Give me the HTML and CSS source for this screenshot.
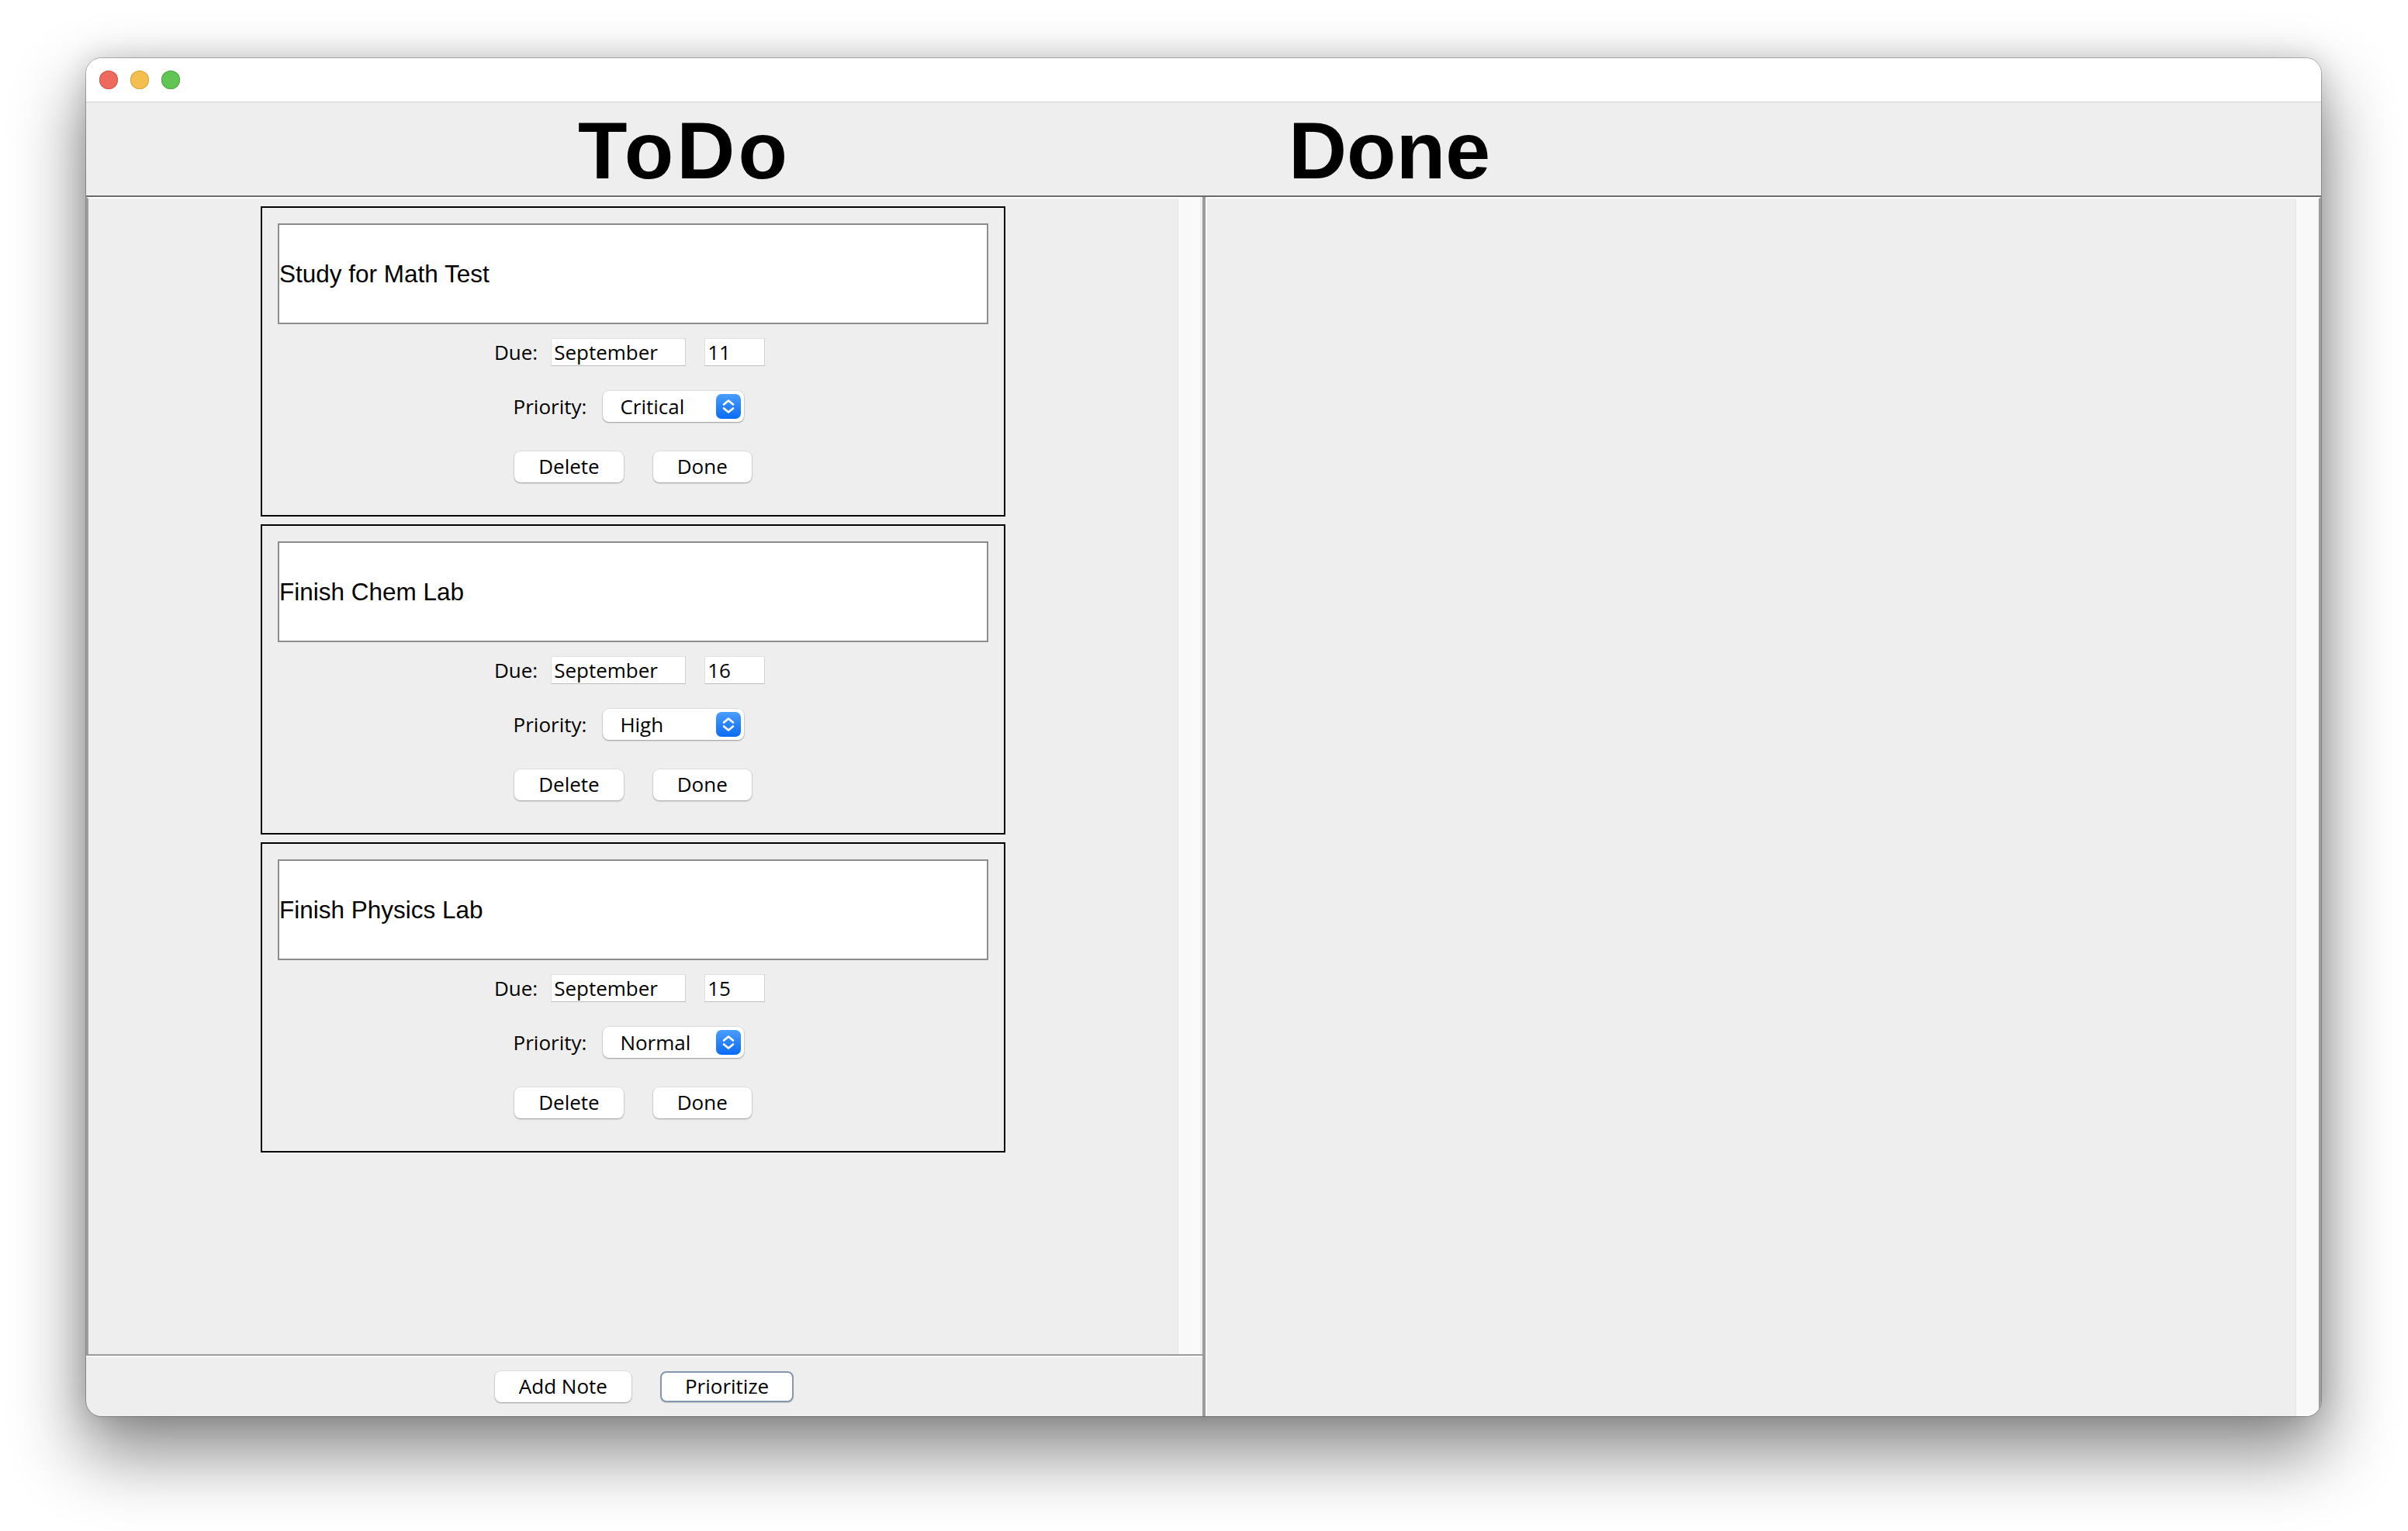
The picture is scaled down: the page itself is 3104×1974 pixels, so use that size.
FILE: index.html
```html
<!DOCTYPE html>
<html>
<head>
<meta charset="utf-8">
<title>ToDo</title>
<link rel="stylesheet" href="styles.css">
</head>
<body>
<div class="window">
  <div class="titlebar">
    <span class="light red"></span><span class="light yellow"></span><span class="light green"></span>
  </div>
  <div class="header">
    <div class="h-todo">ToDo</div>
    <div class="h-done">Done</div>
  </div>
  <div class="main">
    <div class="left">
      <div class="pane">
        <div class="viewport">
          <div class="card">
            <div class="note">Study for Math Test</div>
            <div class="row due"><span class="label">Due:</span><span class="field month">September</span><span class="field day">11</span></div>
            <div class="row prio"><span class="label">Priority:</span><span class="combo"><span>Critical</span><span class="arrows"><svg viewBox="0 0 32 32" width="32" height="32"><path d="M10 13.5 L16 8.5 L22 13.5 M10 18.5 L16 23.5 L22 18.5" fill="none" stroke="#fff" stroke-width="2.6" stroke-linecap="round" stroke-linejoin="round"/></svg></span></span></div>
            <div class="row actions"><button class="btn">Delete</button><button class="btn">Done</button></div>
          </div>
          <div class="card">
            <div class="note">Finish Chem Lab</div>
            <div class="row due"><span class="label">Due:</span><span class="field month">September</span><span class="field day">16</span></div>
            <div class="row prio"><span class="label">Priority:</span><span class="combo"><span>High</span><span class="arrows"><svg viewBox="0 0 32 32" width="32" height="32"><path d="M10 13.5 L16 8.5 L22 13.5 M10 18.5 L16 23.5 L22 18.5" fill="none" stroke="#fff" stroke-width="2.6" stroke-linecap="round" stroke-linejoin="round"/></svg></span></span></div>
            <div class="row actions"><button class="btn">Delete</button><button class="btn">Done</button></div>
          </div>
          <div class="card">
            <div class="note">Finish Physics Lab</div>
            <div class="row due"><span class="label">Due:</span><span class="field month">September</span><span class="field day">15</span></div>
            <div class="row prio"><span class="label">Priority:</span><span class="combo"><span>Normal</span><span class="arrows"><svg viewBox="0 0 32 32" width="32" height="32"><path d="M10 13.5 L16 8.5 L22 13.5 M10 18.5 L16 23.5 L22 18.5" fill="none" stroke="#fff" stroke-width="2.6" stroke-linecap="round" stroke-linejoin="round"/></svg></span></span></div>
            <div class="row actions"><button class="btn">Delete</button><button class="btn">Done</button></div>
          </div>
        </div>
        <div class="track"></div>
      </div>
      <div class="bottombar">
        <button class="btn">Add Note</button>
        <button class="btn default">Prioritize</button>
      </div>
    </div>
    <div class="right">
      <div class="viewport"></div>
      <div class="track"></div>
    </div>
  </div>
</div>
</body>
</html>
```

FILE: styles.css
```css
* { box-sizing: border-box; }
html, body { margin: 0; background: #fff; }
body {
  font-family: "Open Sans", "Noto Sans", sans-serif;
  color: #000;
  min-height: 1974px;
  padding: 75px 0 0 111px;
}

.window {
  width: 2881px;
  height: 1751px;
  border-radius: 20px;
  overflow: hidden;
  background: #eee;
  display: flex;
  flex-direction: column;
  box-shadow: 0 0 0 1px rgba(0,0,0,0.24), 0 44px 90px 6px rgba(0,0,0,0.45), 0 0 36px rgba(0,0,0,0.16);
}

.titlebar {
  height: 57px;
  flex: none;
  background: #fff;
  border-bottom: 1px solid #cfcfcf;
  display: flex;
  align-items: center;
  gap: 16px;
  padding-left: 17px;
}
.light { width: 24px; height: 24px; border-radius: 50%; }
.red { background: #ee6a5f; box-shadow: inset 0 0 0 1px #d5574c; }
.yellow { background: #f5bf4f; box-shadow: inset 0 0 0 1px #d9a13a; }
.green { background: #61c554; box-shadow: inset 0 0 0 1px #4ea943; }

.header {
  height: 122px;
  flex: none;
  border-bottom: 2px solid #6b6b6b;
  display: flex;
  padding: 10px 0 0 634px;
  font-family: "Liberation Sans", Arial, sans-serif;
  font-weight: bold;
  font-size: 104px;
  line-height: 104px;
}
.h-todo { width: 916px; letter-spacing: 4px; }

.main { flex: 1; display: flex; min-height: 0; }

.left {
  width: 1443px;
  flex: none;
  display: flex;
  flex-direction: column;
  border-right: 4px solid #9b9b9b;
}
.pane {
  flex: 1;
  display: flex;
  min-height: 0;
  border-top: 2px solid #fff;
  border-left: 3px solid #9d9d9d;
  border-bottom: 2px solid #9b9b9b;
  padding-right: 2px;
}
.viewport {
  flex: 1;
  padding-top: 10px;
  display: flex;
  flex-direction: column;
  align-items: center;
  gap: 10px;
}
.track {
  width: 30px;
  flex: none;
  background: #f9f9f9;
  border-left: 1px solid #e5e5e5;
  border-right: 1px solid #efefef;
}

.bottombar {
  height: 78px;
  flex: none;
  border-top: 2px solid #fff;
  display: flex;
  justify-content: center;
  align-items: flex-start;
  padding-top: 18px;
  gap: 37px;
}

.right {
  flex: 1;
  display: flex;
  border-top: 2px solid #fff;
  border-left: 2px solid #fff;
  border-right: 3px solid #9d9d9d;
}

.card {
  width: 960px;
  height: 400px;
  flex: none;
  border: 2px solid #000;
  padding: 20px 20px 0;
}
.note {
  height: 130px;
  background: #fff;
  border: 2px solid #8c8c8c;
  display: flex;
  align-items: center;
  font-family: "Liberation Sans", Arial, sans-serif;
  font-size: 31.5px;
}
.row { display: flex; justify-content: center; align-items: center; }
.label { font-size: 26px; }
.due { margin-top: 18px; height: 36px; padding-right: 9px; }
.field {
  height: 36px;
  background: #fff;
  border: 1px solid #e0e0e0;
  border-bottom-color: #bdbdbd;
  border-right-color: #d2d2d2;
  font-size: 26px;
  padding-left: 3px;
  display: flex;
  align-items: center;
}
.month { width: 174px; margin-left: 17px; }
.day { width: 78px; margin-left: 24px; }

.prio { margin-top: 32px; height: 40px; padding-right: 11px; }
.combo {
  width: 182px;
  height: 40px;
  margin-left: 21px;
  background: #fff;
  border-radius: 8px;
  box-shadow: 0 1px 2px rgba(0,0,0,0.32), 0 0 0 1px rgba(0,0,0,0.05);
  display: flex;
  align-items: center;
  justify-content: space-between;
  padding: 0 4px 0 22px;
  font-size: 26px;
}
.arrows {
  width: 32px;
  height: 32px;
  border-radius: 7px;
  background: linear-gradient(#4a9dfc, #0a6cf6);
  display: block;
}
.arrows svg { display: block; }

.actions { margin-top: 38px; gap: 38px; }
.btn {
  height: 40px;
  padding: 0 31px 3px;
  border: none;
  border-radius: 8px;
  background: #fff;
  box-shadow: 0 1px 2px rgba(0,0,0,0.32), 0 0 0 1px rgba(0,0,0,0.05);
  font-family: "Open Sans", "Noto Sans", sans-serif;
  font-size: 26px;
  color: #000;
  display: inline-flex;
  align-items: center;
  justify-content: center;
  margin: 0;
}
.btn.default {
  border: 2px solid #8696b0;
  padding: 0 30px 3px;
  box-shadow: 0 1px 1px rgba(0,0,0,0.15);
}
```
